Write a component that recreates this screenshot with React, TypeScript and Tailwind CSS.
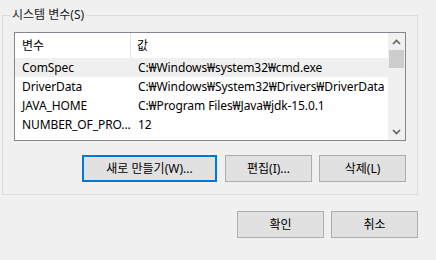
import React from "react";

const font = { fontFamily: "'Noto Sans', 'Noto Sans CJK KR', sans-serif" };

function Chevron({ up }: { up?: boolean }) {
  return (
    <svg width="9" height="6" viewBox="0 0 9 6">
      <path
        d={up ? "M1 5 L4.5 1.5 L8 5" : "M1 1 L4.5 4.5 L8 1"}
        fill="none"
        stroke="#606060"
        strokeWidth="1.6"
      />
    </svg>
  );
}

const rows: [string, string][] = [
  ["ComSpec", "C:₩Windows₩system32₩cmd.exe"],
  ["DriverData", "C:₩Windows₩System32₩Drivers₩DriverData"],
  ["JAVA_HOME", "C:₩Program Files₩Java₩jdk-15.0.1"],
  ["NUMBER_OF_PRO...", "12"],
];

function Btn({ children, w, primary }: { children: React.ReactNode; w: string; primary?: boolean }) {
  return (
    <div
      className={`${w} h-[27px] flex items-center justify-center bg-[#e1e1e1] text-[12px] text-black ${
        primary ? "border-2 border-[#0078d7]" : "border border-[#adadad]"
      }`}
    >
      {children}
    </div>
  );
}

export default function App() {
  return (
    <div className="w-[436px] h-[260px] bg-[#f0f0f0] pl-[2px] pt-[15px] overflow-hidden" style={font}>
      <div className="relative w-[416px] h-[180px] border border-[#dcdcdc] pl-[11px] pt-[16px]">
        <span className="absolute left-[7px] -top-[9px] px-[2px] bg-[#f0f0f0] text-[12px] leading-[16px] text-[#1a1a1a]">
          시스템 변수(S)
        </span>
        <div className="w-[392px] h-[109px] border border-[#828790] bg-white flex overflow-hidden">
          <div className="flex-1 flex flex-col overflow-hidden">
            <div className="h-[25px] shrink-0 flex items-center text-[12px] text-black">
              <div className="w-[116px] h-full flex items-center pl-[7px] border-r border-[#e5e5e5]">변수</div>
              <div className="pl-[6px]">값</div>
            </div>
            {rows.map((r, i) => (
              <div
                key={r[0]}
                className={`h-[19px] shrink-0 flex items-center text-[12px] text-black tracking-[-0.1px] ${i === 0 ? "bg-[#efefef]" : ""}`}
              >
                <div className="w-[116px] pl-[7px] whitespace-nowrap">{r[0]}</div>
                <div className="pl-[7px] whitespace-nowrap">{r[1]}</div>
              </div>
            ))}
          </div>
          <div className="w-[17px] shrink-0 bg-[#f0f0f0] flex flex-col items-center">
            <div className="h-[17px] flex items-center justify-center">
              <Chevron up />
            </div>
            <div className="w-[15px] h-[18px] bg-[#cdcdcd]" />
            <div className="flex-1" />
            <div className="h-[17px] flex items-center justify-center">
              <Chevron />
            </div>
          </div>
        </div>
        <div className="w-[392px] flex justify-end mt-[14px]">
          <Btn w="w-[135px]" primary>
            새로 만들기(W)...
          </Btn>
          <div className="w-[8px]" />
          <Btn w="w-[87px]">편집(I)...</Btn>
          <div className="w-[7px]" />
          <Btn w="w-[87px]">삭제(L)</Btn>
        </div>
      </div>
      <div className="w-[416px] flex justify-end mt-[16px]">
        <Btn w="w-[87px]">확인</Btn>
        <div className="w-[7px]" />
        <Btn w="w-[87px]">취소</Btn>
      </div>
    </div>
  );
}
